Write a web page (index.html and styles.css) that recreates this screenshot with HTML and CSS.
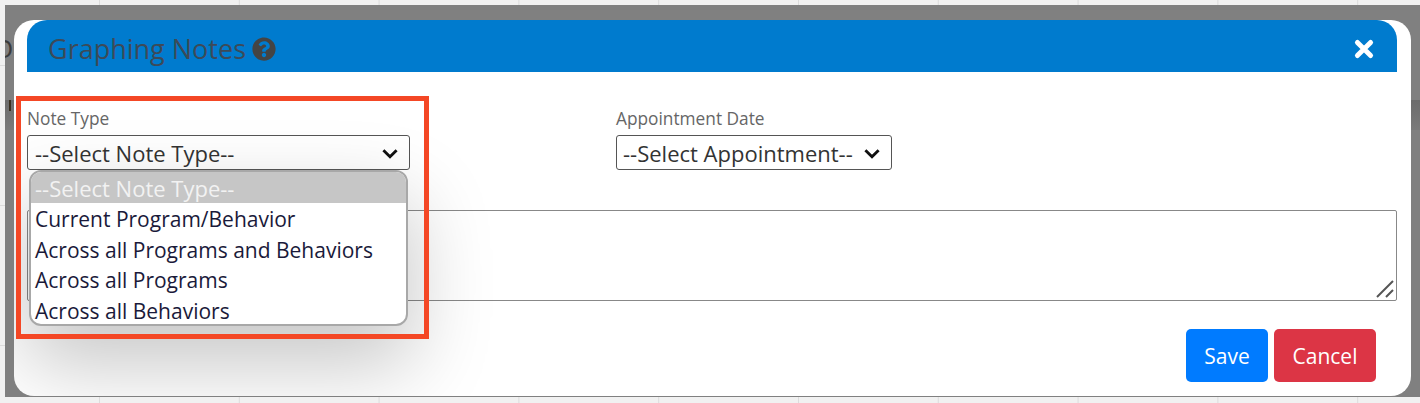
FILE: index.html
```html
<!DOCTYPE html>
<html>
<head>
    <meta charset="UTF-8">
    <title>Graphing Notes</title>
    <link rel="stylesheet" href="styles.css">
</head>
<body>
    <div class="backdrop">
        <div class="backdrop_band"></div>
        <span class="behind_letter">O</span>
        <span class="behind_mark"></span>
        <div class="modal">
            <div class="modal_header">
                <h2 class="modal_title">Graphing Notes
                    <svg class="help_icon" viewBox="0 0 512 512"><path d="M504 256c0 137-111 248-248 248S8 393 8 256 119 8 256 8s248 111 248 248zM262.700 90c-54.500 0-89.300 23-116.600 63.800-3.500 5.300-2.400 12.400 2.700 16.300l34.700 26.300c5.200 3.900 12.600 3 16.700-2.100 17.900-22.700 30.100-35.800 57.300-35.800 20.400 0 45.700 13.100 45.700 32.900 0 15-12.400 22.700-32.600 34-23.600 13.200-54.800 29.700-54.800 70.900V300c0 6.600 5.400 12 12 12h56c6.600 0 12-5.400 12-12v-1.300c0-28.600 83.500-29.800 83.500-107.200 0-58.300-60.500-102.500-117.200-102.500zM256 338c-25.500 0-46.200 20.700-46.200 46.200 0 25.500 20.700 46.200 46.200 46.200s46.200-20.700 46.200-46.200c0-25.500-20.700-46.200-46.200-46.200z"/></svg>
                </h2>
                <svg class="close_icon" viewBox="0 0 20 20"><path d="M4 4l12 12M16 4L4 16"/></svg>
            </div>
            <div class="modal_body">
                <div class="field_row">
                    <div class="field field_type">
                        <label class="field_label">Note Type</label>
                        <div class="select_box">
                            <span>--Select Note Type--</span>
                            <svg class="chevron" viewBox="0 0 16 10"><path d="M2 2l6 6 6-6"/></svg>
                        </div>
                    </div>
                    <div class="field">
                        <label class="field_label">Appointment Date</label>
                        <div class="select_box select_appt">
                            <span>--Select Appointment--</span>
                            <svg class="chevron" viewBox="0 0 16 10"><path d="M2 2l6 6 6-6"/></svg>
                        </div>
                    </div>
                </div>
                <div class="notes_box">
                    <svg class="resize_grip" viewBox="0 0 20 20"><path d="M2 18L18 2M11 18l7-7"/></svg>
                </div>
                <div class="modal_footer">
                    <button class="btn btn_save">Save</button>
                    <button class="btn btn_cancel">Cancel</button>
                </div>
            </div>
            <ul class="dropdown">
                <li class="selected">--Select Note Type--</li>
                <li>Current Program/Behavior</li>
                <li>Across all Programs and Behaviors</li>
                <li>Across all Programs</li>
                <li>Across all Behaviors</li>
            </ul>
            <div class="highlight"></div>
        </div>
    </div>
</body>
</html>
```

FILE: styles.css
```css
html,
body {
    height: 100%;
}
body {
    margin: 0;
    overflow: hidden;
    background-color: #f1f1f1;
    /* table lines of the page behind the dialog */
    background-image:
        linear-gradient(90deg, #dcdcdc 1px, transparent 1px),
        linear-gradient(#dcdcdc 1px, transparent 1px);
    background-size: 139.800px 100%, 100% 140px;
    background-position: 99px 0, 0 65px;
    font-family: "Open Sans", "Noto Sans", sans-serif;
    color: #212529;
}
.backdrop {
    position: relative;
    overflow: hidden;
    box-sizing: border-box;
    height: 392px;
    margin: 5px 0 0 5px;
    padding: 15px 9px 0 9px;
    background: #808080;
}
.backdrop_band {
    position: absolute;
    left: 0;
    right: 0;
    top: 95px;
    height: 30px;
    background: linear-gradient(#6c6c6c, #7a7a7a);
}
.behind_letter {
    position: absolute;
    left: -12px;
    top: 25px;
    font-size: 26px;
    color: #3c3c3c;
}
.behind_mark {
    position: absolute;
    left: 4px;
    top: 95px;
    width: 2px;
    height: 11px;
    background: #3a3020;
}
.modal {
    position: relative;
    overflow: hidden;
    box-sizing: border-box;
    height: 376px;
    padding: 0 14px 0 13px;
    background: #fff;
    border-radius: 20px;
}
.modal_header {
    display: flex;
    align-items: center;
    justify-content: space-between;
    box-sizing: border-box;
    height: 52px;
    padding: 5px 22px 0 21px;
    background: #007bce;
    border-radius: 20px 20px 0 0;
}
.modal_title {
    display: flex;
    align-items: center;
    gap: 6px;
    margin: 0;
    font-size: 27px;
    font-weight: 400;
    color: #3c4a58;
}
.help_icon {
    width: 24px;
    height: 24px;
    fill: #444;
}
.close_icon {
    width: 22px;
    height: 22px;
    fill: none;
    stroke: #fff;
    stroke-width: 4.500;
    stroke-linecap: round;
}
.modal_body {
    display: flex;
    flex-direction: column;
    padding-top: 36px;
}
.field_row {
    display: flex;
}
.field_type {
    width: 589px;
}
.field_label {
    display: block;
    height: 27px;
    font-size: 17.300px;
    line-height: 22px;
    color: #666;
}
.select_box {
    box-sizing: border-box;
    display: flex;
    align-items: center;
    justify-content: space-between;
    width: 383px;
    height: 35px;
    padding: 1px 10px 0 7px;
    border: 1px solid #555;
    border-radius: 3px;
    font-size: 22px;
    color: #333;
}
.select_appt {
    width: 276px;
    padding-left: 6px;
}
.chevron {
    width: 18px;
    height: 11px;
    fill: none;
    stroke: #111;
    stroke-width: 2.600;
}
.notes_box {
    position: relative;
    box-sizing: border-box;
    height: 91px;
    margin-top: 40px;
    border: 1px solid #888;
    border-radius: 2px;
}
.resize_grip {
    position: absolute;
    right: 1px;
    bottom: 1px;
    width: 20px;
    height: 20px;
    fill: none;
    stroke: #555;
    stroke-width: 2;
}
.modal_footer {
    display: flex;
    justify-content: flex-end;
    gap: 6px;
    margin-top: 28px;
    padding-right: 21px;
}
.btn {
    height: 53px;
    padding: 0;
    border: none;
    border-radius: 5px;
    font-family: inherit;
    font-size: 21px;
    color: #fff;
}
.btn_save {
    width: 82px;
    background: #007bff;
}
.btn_cancel {
    width: 102px;
    background: #dc3545;
}
.dropdown {
    position: absolute;
    left: 15px;
    top: 150px;
    box-sizing: border-box;
    width: 379px;
    height: 156px;
    margin: 0;
    padding: 0;
    overflow: hidden;
    list-style: none;
    background: #fff;
    border: 2px solid #a8a8a8;
    border-radius: 12px;
    box-shadow: 0 35px 80px 5px rgba(0, 0, 0, 0.22);
    font-size: 21px;
    color: #1a1a3a;
}
.dropdown li {
    height: 30.700px;
    padding-left: 4px;
    line-height: 33px;
    white-space: nowrap;
}
.dropdown li.selected {
    height: 31px;
    font-size: 22px;
    background: #c6c6c6;
    color: #f2f2f2;
}
.highlight {
    position: absolute;
    left: 2px;
    top: 76px;
    box-sizing: border-box;
    width: 413px;
    height: 243px;
    border: 5.500px solid #f44725;
}
```
